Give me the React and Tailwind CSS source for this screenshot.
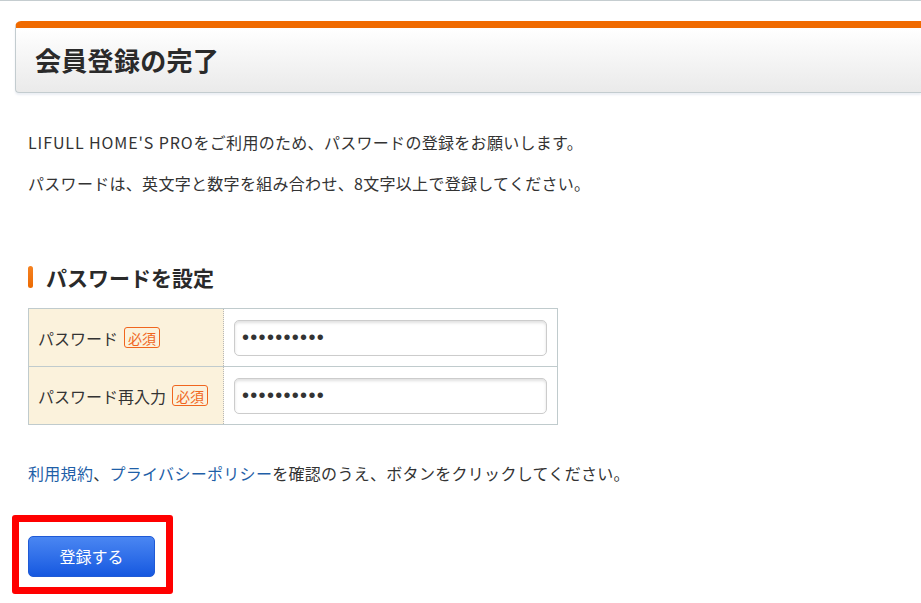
import React from "react";

function Badge() {
  return (
    <span className="ml-[6px] inline-flex h-[21px] items-center rounded-[3px] border border-[#f0661e] px-[3px] text-[14px] leading-none text-[#f0661e]">
      必須
    </span>
  );
}

function PwInput() {
  return (
    <input
      type="password"
      readOnly
      defaultValue="abcdefghij"
      className="h-[36px] w-[313px] rounded-[5px] border border-[#cccccc] bg-white px-[7px] text-[20px] text-[#333] shadow-[inset_0_2px_3px_rgba(0,0,0,0.12)] outline-none font-['Liberation_Sans',sans-serif] tracking-[1.3px]"
    />
  );
}

export default function App() {
  return (
    <div className="h-[603px] w-[921px] overflow-hidden bg-white text-[#333] font-['Noto_Sans_CJK_JP','Noto_Sans',sans-serif]">
      <div className="h-px bg-[#c5cdd0]" />
      <div className="pl-[15px] pt-[20px]">
        <div className="flex h-[72px] items-center rounded-tl-[6px] rounded-bl-[4px] border-b border-l border-t-[7px] border-b-[#c3cccf] border-l-[#c3cccf] border-t-[#f06a00] bg-linear-to-b from-white to-[#eaeaea] pl-[19px] shadow-[0_2px_2px_rgba(180,190,210,0.25)]">
          <h1 className="text-[26px] font-bold leading-none tracking-[0.3px] text-[#2a2a2a]">会員登録の完了</h1>
        </div>
      </div>

      <div className="pl-[28px]">
        <p className="mt-[37px] text-[16px] leading-[24px] tracking-[0.3px]">
          <span className="tracking-[0.9px]">LIFULL HOME'S PRO</span>をご利用のため、パスワードの登録をお願いします。
        </p>
        <p className="mt-[17px] text-[16px] leading-[24px] tracking-[0.3px]">
          パスワードは、英文字と数字を組み合わせ、8文字以上で登録してください。
        </p>

        <div className="mt-[68px] flex h-[28px] items-center">
          <span className="h-[22px] w-[5px] rounded-[3px] bg-linear-to-b from-[#f58220] to-[#ec6a00]" />
          <h2 className="ml-[13px] text-[21px] font-bold leading-[28px] text-[#2a2a2a]">パスワードを設定</h2>
        </div>

        <div className="mt-[17px] w-[530px] border border-[#c0cbcd] text-[16px]">
          <div className="flex h-[57px]">
            <div className="flex w-[195px] items-center border-r border-dotted border-r-[#b8b8b8] bg-[#fbf2dc] pl-[9px]">
              <span>パスワード</span>
              <Badge />
            </div>
            <div className="flex flex-1 items-center pl-[10px]">
              <PwInput />
            </div>
          </div>
          <div className="flex h-[58px] border-t border-[#c0cbcd]">
            <div className="flex w-[195px] items-center border-r border-dotted border-r-[#b8b8b8] bg-[#fbf2dc] pl-[9px]">
              <span>パスワード再入力</span>
              <Badge />
            </div>
            <div className="flex flex-1 items-center pl-[10px]">
              <PwInput />
            </div>
          </div>
        </div>

        <p className="mt-[36px] text-[16px] leading-[24px] tracking-[0.3px]">
          <a className="text-[#1f5fa8]">利用規約</a>、<a className="text-[#1f5fa8]">プライバシーポリシー</a>を確認のうえ、ボタンをクリックしてください。
        </p>
      </div>

      <div className="ml-[12px] mt-[30px] h-[79px] w-[161px] rounded-[3px] border-[7px] border-[#ff0000] pl-[9px] pt-[14px]">
        <button className="flex h-[41px] w-[127px] items-center justify-center rounded-[5px] border border-[#1f5ad6] bg-linear-to-b from-[#4a86f2] to-[#1558e0] pb-[2px] text-[16px] text-white">
          登録する
        </button>
      </div>
    </div>
  );
}
